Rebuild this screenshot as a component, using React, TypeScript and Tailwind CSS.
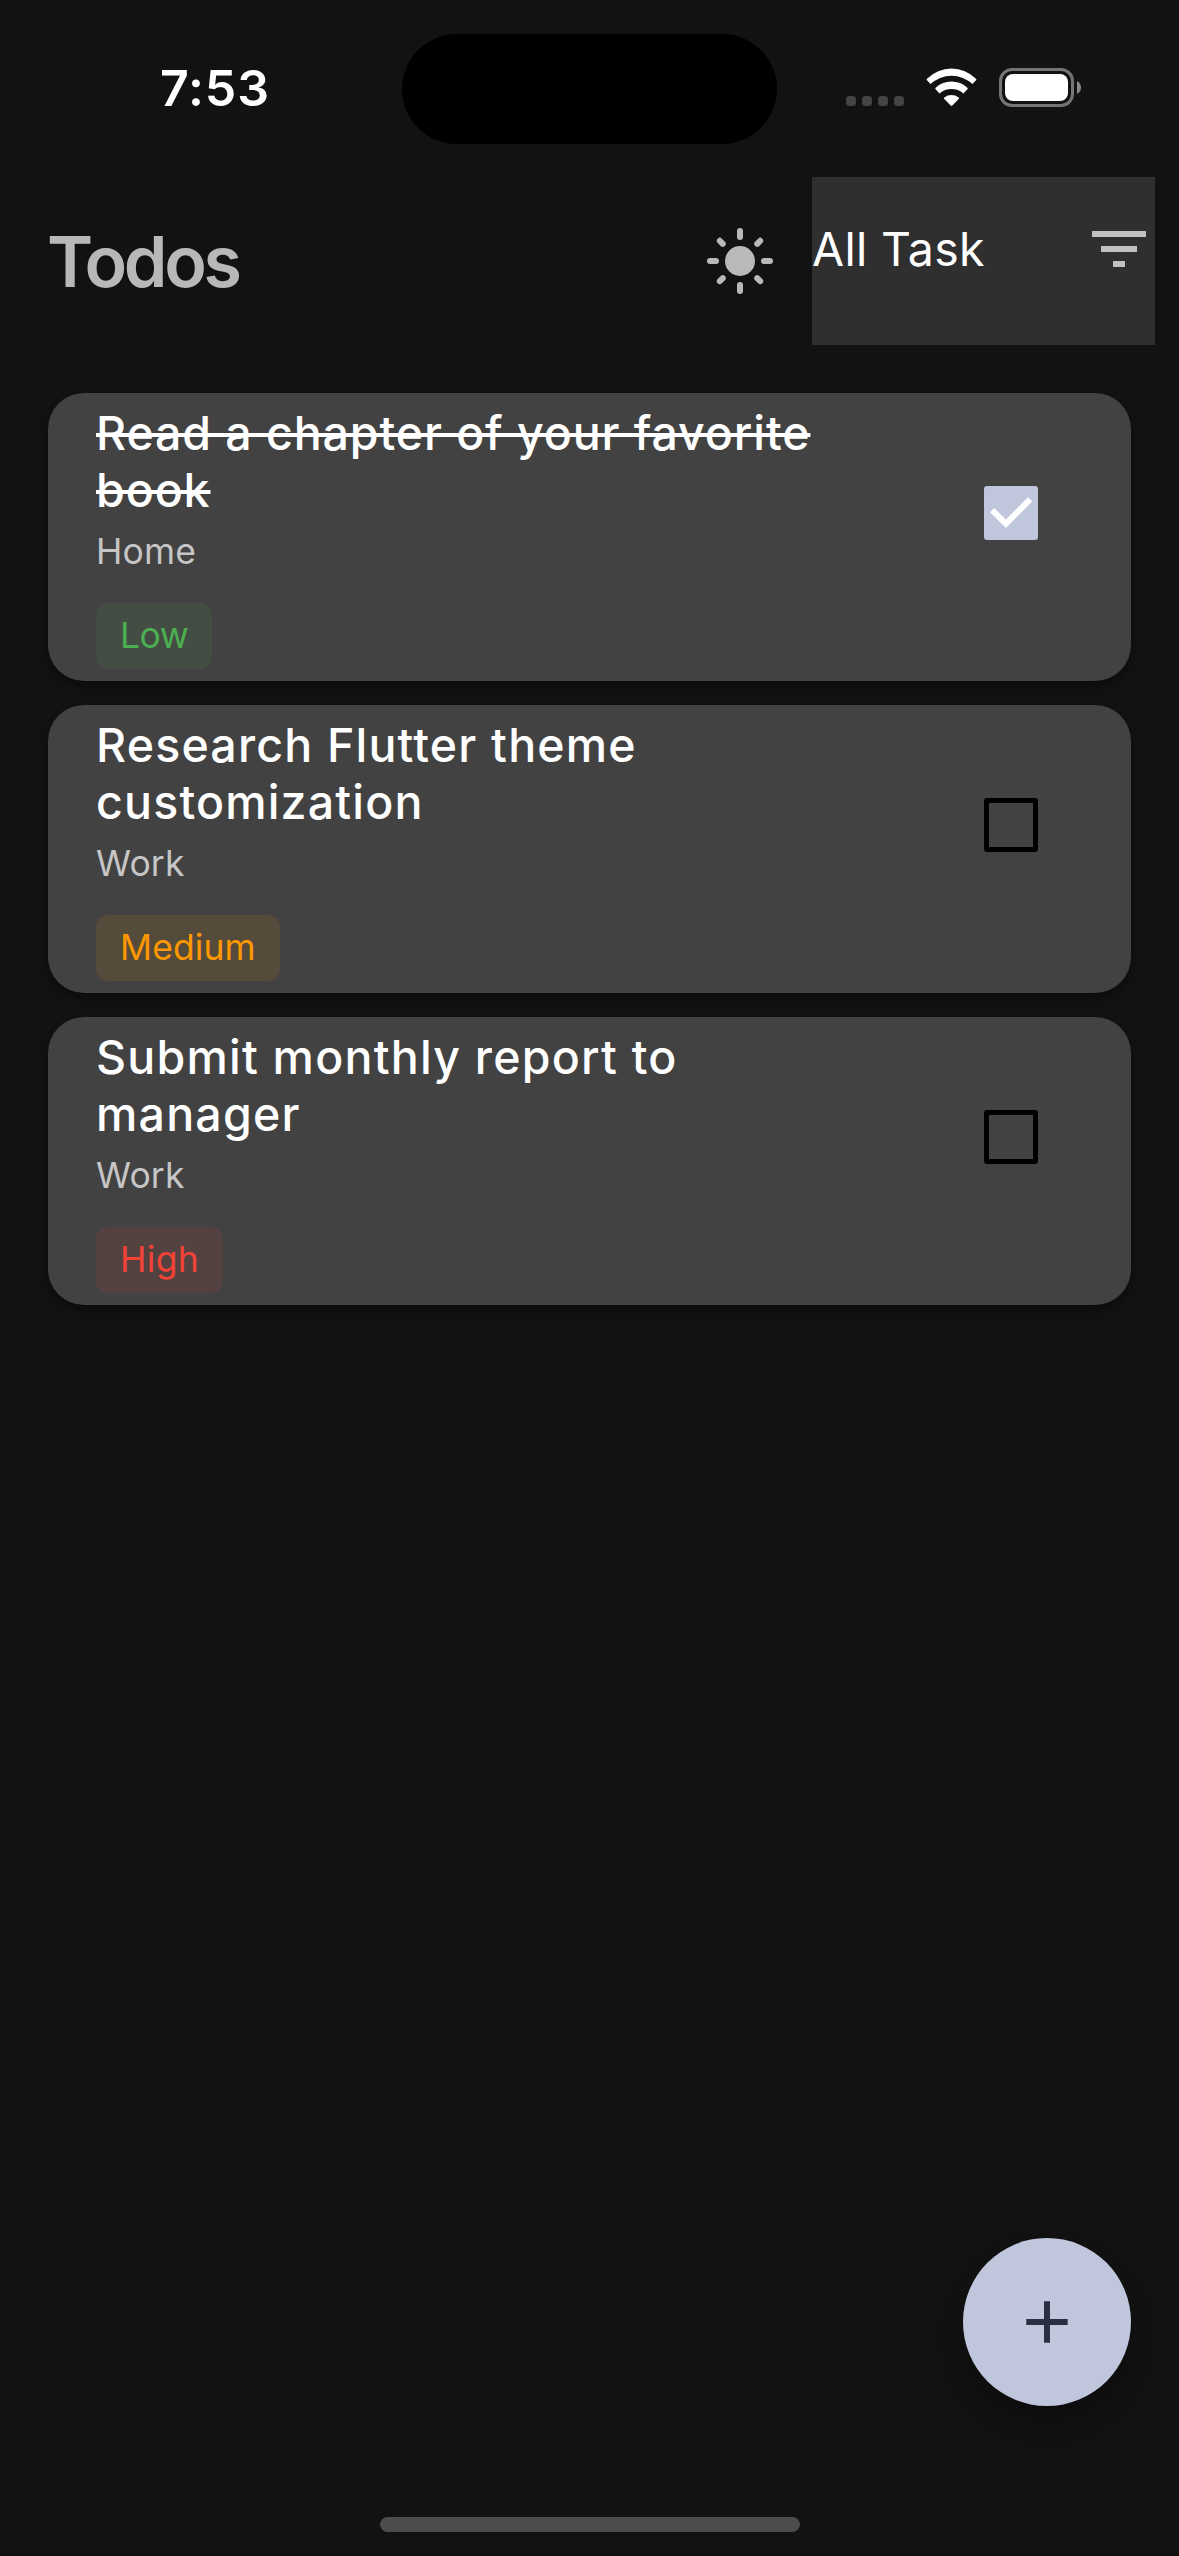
import clsx from "clsx";

type Todo = {
  title: string;
  titleClass: string;
  category: string;
  priority: string;
  badgeClass: string;
  done: boolean;
};

const todos: Todo[] = [
  {
    title: "Read a chapter of your favorite book",
    titleClass: "tracking-[0.9px] line-through decoration-[4px]",
    category: "Home",
    priority: "Low",
    badgeClass: "bg-[#434d43] text-[#4caf50] tracking-[-0.5px]",
    done: true,
  },
  {
    title: "Research Flutter theme customization",
    titleClass: "tracking-[1.18px]",
    category: "Work",
    priority: "Medium",
    badgeClass: "bg-[#554b3b] text-[#ff9800] tracking-[0.1px]",
    done: false,
  },
  {
    title: "Submit monthly report to manager",
    titleClass: "tracking-[1.23px]",
    category: "Work",
    priority: "High",
    badgeClass: "bg-[#544241] text-[#f44336] tracking-[0.35px]",
    done: false,
  },
];

function StatusBar() {
  return (
    <div className="relative flex h-[177px] items-start justify-between pr-[98px] pl-[160px]">
      <span className="mt-[58px] text-[50px] leading-[60px] font-[580] tracking-[0.9px] text-white">7:53</span>
      <div className="absolute top-[34px] left-[402px] h-[110px] w-[375px] rounded-full bg-black" />
      <div className="mt-[68px] flex items-start">
        <div className="mt-[28px] flex gap-[6px]">
          <i className="size-[10px] rounded-[3.5px] bg-[#444444]" />
          <i className="size-[10px] rounded-[3.5px] bg-[#444444]" />
          <i className="size-[10px] rounded-[3.5px] bg-[#444444]" />
          <i className="size-[10px] rounded-[3.5px] bg-[#444444]" />
        </div>
        <svg className="ml-[22px] h-[39px] w-[51px]" viewBox="0 0 51 39" fill="#fff">
          <path d="M1 12.2Q0.2 11.5 1 10.7A34.5 34.5 0 0 1 50 10.7Q50.8 11.5 50 12.2L46.5 16.1A30.5 30.5 0 0 0 4.5 16.1Z" />
          <path d="M9.6 21.2Q8.8 20.5 9.6 19.7A23.5 23.5 0 0 1 41.4 19.7Q42.2 20.5 41.4 21.2L37.5 25.4A18.5 18.5 0 0 0 13.5 25.4Z" />
          <path d="M18.3 31Q17.4 30.2 18.3 29.4A12 12 0 0 1 32.7 29.4Q33.6 30.2 32.7 31L26.3 37.5Q25.5 38.3 24.7 37.5Z" />
        </svg>
        <svg className="ml-[22px] h-[39px] w-[82px]" viewBox="0 0 82 39">
          <rect x="1.5" y="1.5" width="72" height="36" rx="11.5" fill="none" stroke="#757575" strokeWidth="3" />
          <rect x="6" y="6" width="63" height="27" rx="8" fill="#fff" />
          <path d="M78 13Q82 15.5 82 19.5T78 26Z" fill="#8a8a8a" />
        </svg>
      </div>
    </div>
  );
}

function SunIcon() {
  return (
    <svg className="size-[72px]" viewBox="-36 -36 72 72" stroke="#b9b9b9" strokeWidth="6" strokeLinecap="round">
      <circle r="15" fill="#b9b9b9" stroke="none" />
      <path d="M0 -30V-24M0 24V30M-30 0H-24M24 0H30M-20.2 -20.2L-17.2 -17.2M20.2 -20.2L17.2 -17.2M-20.2 20.2L-17.2 17.2M20.2 20.2L17.2 17.2" />
    </svg>
  );
}

function Header() {
  return (
    <header className="flex h-[168px] items-center pr-6 pl-[47px]">
      <h1 className="pt-[2px] text-[70px] leading-[84px] font-[580] tracking-[-3.3px] text-[#b8b8b8]">Todos</h1>
      <div className="mr-[36px] ml-auto">
        <SunIcon />
      </div>
      <button className="flex h-[168px] w-[343px] items-start justify-between bg-[#2f2f2f] pr-[9px]">
        <span className="mt-[44px] text-[46.5px] leading-[56px] tracking-[0.3px] text-white">All Task</span>
        <svg className="mt-[54px] h-[36px] w-[54px]" viewBox="0 0 54 36" fill="#c1c1c1">
          <path d="M0 0H54V6H0ZM9 15H45V21H9ZM21 30H33V36H21Z" />
        </svg>
      </button>
    </header>
  );
}

function Checkbox({ checked }: { checked: boolean }) {
  return (
    <div
      className={clsx(
        "mt-[93px] size-[54px] rounded-[3px]",
        checked ? "bg-[#c0c6dc]" : "border-5 border-black",
      )}
    >
      {checked && (
        <svg className="size-[54px]" viewBox="0 0 54 54" fill="#fff">
          <path d="M6 26.3L10.2 22L21.9 33.5L44 11.3L48.2 15.6L21.9 42Z" />
        </svg>
      )}
    </div>
  );
}

function TodoCard({ todo }: { todo: Todo }) {
  return (
    <article className="flex h-[288px] items-start justify-between rounded-[36px] bg-[#424242] pr-[93px] pl-12 shadow-[0_5px_9px_rgba(0,0,0,0.35)]">
      <div className="flex w-[740px] flex-col items-start pt-3">
        <h2 className={clsx("text-[46.5px] leading-[57px] font-medium text-white", todo.titleClass)}>{todo.title}</h2>
        <p className="mt-[9px] text-[35.5px] leading-[48px] font-[380] tracking-[0.2px] text-[#c6c6c6]">
          {todo.category}
        </p>
        <span
          className={clsx("mt-[27px] h-[66px] rounded-xl px-6 text-[35.5px] leading-[66px] font-[380]", todo.badgeClass)}
        >
          {todo.priority}
        </span>
      </div>
      <Checkbox checked={todo.done} />
    </article>
  );
}

export default function App() {
  return (
    <div className="relative h-[2556px] w-[1179px] overflow-hidden bg-[#121212] font-['Inter',sans-serif]">
      <StatusBar />
      <Header />
      <main className="mt-12 flex flex-col gap-6 px-12">
        {todos.map((todo) => (
          <TodoCard key={todo.title} todo={todo} />
        ))}
      </main>
      <button className="absolute right-12 bottom-[150px] flex size-[168px] items-center justify-center rounded-full bg-[#c0c6dc] shadow-[0_16px_28px_rgba(0,0,0,0.3)]">
        <svg className="size-[42px]" viewBox="0 0 42 42" stroke="#2a3042" strokeWidth="6">
          <path d="M21 0.3V41.7M0.3 21H41.7" />
        </svg>
      </button>
      <div className="absolute bottom-6 left-[380px] h-[15px] w-[420px] rounded-full bg-[#4c4c4c]" />
    </div>
  );
}
